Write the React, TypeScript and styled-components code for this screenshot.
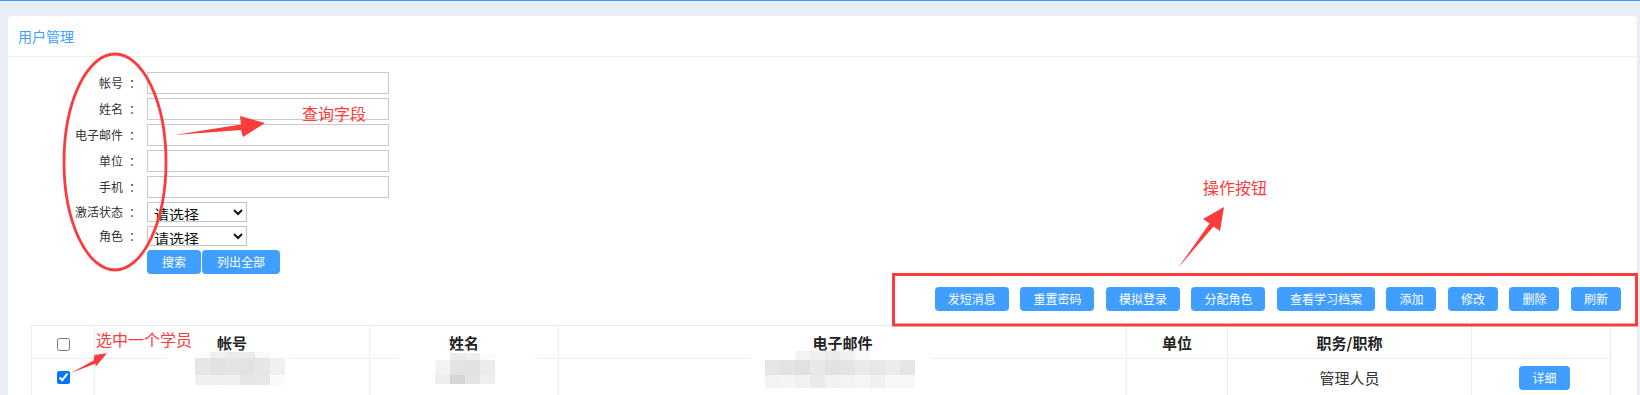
import React from 'react';
import styled, { createGlobalStyle } from 'styled-components';

const FONT = `"Noto Sans CJK SC", "Noto Sans", "Liberation Sans", sans-serif`;
const BLUE = '#409eff';
const RED = '#fb3c3c';

const GlobalStyle = createGlobalStyle`
  html, body {
    margin: 0;
    padding: 0;
    background: #eaedf4;
    font-family: ${FONT};
  }
  * { box-sizing: border-box; }
`;

const Page = styled.div`
  position: relative;
  width: 100%;
  height: 395px;
  overflow: hidden;
  background: #eaedf4;
`;

const TopLine = styled.div`
  height: 1px;
  background: #3e9cf7;
`;

const Card = styled.section`
  margin: 15px 3px 0 8px;
  height: 379px;
  background: #fff;
  border-radius: 4px 4px 0 0;
  overflow: hidden;
`;

const CardHeader = styled.header`
  height: 41px;
  line-height: 40px;
  padding-left: 10px;
  font-size: 14px;
  color: ${BLUE};
  border-bottom: 1px solid #eceef2;
`;

const SearchForm = styled.form`
  display: grid;
  grid-template-columns: 48px 12px auto;
  column-gap: 6px;
  row-gap: 4px;
  align-items: center;
  justify-content: start;
  padding: 15px 0 0 67px;
`;

const Label = styled.label`
  font-size: 12px;
  line-height: 1;
  color: #333;
  text-align: right;
  white-space: nowrap;
`;

const Colon = styled.span`
  font-size: 12px;
  line-height: 1;
  color: #333;
  text-align: center;
`;

const TextInput = styled.input`
  width: 242px;
  height: 22px;
  margin: 0;
  padding: 0 4px;
  border: 1px solid #c9c9c9;
  background: #fff;
  font-family: ${FONT};
  font-size: 12px;
`;

const Select = styled.select`
  width: 100px;
  height: 20px;
  margin: 0;
  padding: 0 0 0 2px;
  border: 1px solid #c4c4c4;
  border-radius: 0;
  background: #fff;
  color: #111;
  font-family: ${FONT};
  font-size: 15px;
  line-height: 18px;
`;

const ButtonGroup = styled.div`
  display: flex;
  gap: 1px;
`;

const Button = styled.button<{ $pad?: number }>`
  height: 24px;
  margin: 0;
  padding: 0 ${(p) => p.$pad ?? 13}px;
  border: none;
  border-radius: 4px;
  background: ${BLUE};
  color: #fff;
  font-family: ${FONT};
  font-size: 12px;
  line-height: 24px;
  white-space: nowrap;
  cursor: pointer;
`;

const Toolbar = styled.div`
  display: flex;
  justify-content: flex-end;
  gap: 11.5px;
  margin-top: 13px;
  padding-right: 16px;
`;

const TableWrap = styled.div`
  position: relative;
  margin: 14px 0 0 23px;
  width: 1579px;
`;

const Table = styled.table`
  width: 100%;
  border-collapse: collapse;
  table-layout: fixed;
`;

const HeadCell = styled.th`
  height: 33px;
  padding: 0;
  border: 1px solid #ebedf0;
  font-size: 15px;
  font-weight: bold;
  color: #222;
  text-align: center;
  vertical-align: middle;
`;

const Cell = styled.td<{ $top?: boolean; $shift?: number }>`
  height: 38px;
  padding: ${(p) => (p.$top ? '6px 0 0' : `0 0 0 ${p.$shift ?? 0}px`)};
  border: 1px solid #ebedf0;
  font-size: 15px;
  color: #333;
  text-align: center;
  vertical-align: ${(p) => (p.$top ? 'top' : 'middle')};
`;

const Check = styled.input`
  width: 13px;
  height: 13px;
  margin: 0;
  vertical-align: middle;
  accent-color: #0075ff;
`;

const Redaction = styled.div<{ $x: number; $y: number; $w: number; $h: number; $px: number; $py: number }>`
  position: absolute;
  left: ${(p) => p.$x}px;
  top: ${(p) => p.$y}px;
  width: ${(p) => p.$w}px;
  height: ${(p) => p.$h}px;
  padding: ${(p) => p.$py}px 0 0 ${(p) => p.$px}px;
  background: #fff;
  border-radius: 10px;
  box-shadow: 0 2px 4px 1px #fff;
`;

const Mosaic = styled.div<{ $cols: number; $rows: string }>`
  display: grid;
  grid-template-columns: repeat(${(p) => p.$cols}, 15px);
  grid-template-rows: ${(p) => p.$rows};
  filter: blur(0.4px);
`;

const Tile = styled.span<{ $c: string }>`
  display: block;
  background: ${(p) => p.$c};
`;

const Overlay = styled.svg`
  position: absolute;
  left: 0;
  top: 0;
  pointer-events: none;
`;

const Note = styled.span<{ $x: number; $y: number; $size: number }>`
  position: absolute;
  left: ${(p) => p.$x}px;
  top: ${(p) => p.$y}px;
  font-size: ${(p) => p.$size}px;
  line-height: 1;
  color: ${RED};
  white-space: nowrap;
  pointer-events: none;
`;

const fields = ['帐号', '姓名', '电子邮件', '单位', '手机'];
const selects = ['激活状态', '角色'];
const actions = ['发短消息', '重置密码', '模拟登录', '分配角色', '查看学习档案', '添加', '修改', '删除', '刷新'];
const columns: { w: number; label?: string }[] = [
  { w: 63 },
  { w: 275, label: '帐号' },
  { w: 189, label: '姓名' },
  { w: 568, label: '电子邮件' },
  { w: 101, label: '单位' },
  { w: 244, label: '职务/职称' },
  { w: 139 },
];

type Blob = { x: number; y: number; w: number; h: number; px: number; py: number; rows: string; colors: string[][] };

const blobs: Blob[] = [
  {
    x: 135, y: 26, w: 120, h: 35, px: 29, py: 1, rows: '6px 17px 10px',
    colors: [
      ['#fdfdfd', '#f0f0f0', '#ebebeb', '#ececec', '#f9f9f9', '#ffffff'],
      ['#e6e6e6', '#e2e2e2', '#e4e4e4', '#e3e3e3', '#e6e6e6', '#f0f0f0'],
      ['#efefef', '#f0f0f0', '#efefef', '#e6e6e6', '#e7e7e7', '#fafafa'],
    ],
  },
  {
    x: 369, y: 26, w: 134, h: 34, px: 35, py: 2, rows: '7px 15px 9px',
    colors: [
      ['#ffffff', '#ebebeb', '#efefef', '#fafafa'],
      ['#f3f3f3', '#e3e3e3', '#e2e2e2', '#ececec'],
      ['#ededed', '#d6d6d6', '#e4e4e4', '#efefef'],
    ],
  },
  {
    x: 721, y: 26, w: 179, h: 40, px: 13, py: 0, rows: '9px 15px 13px',
    colors: [
      ['#ffffff', '#ffffff', '#f2f3f5', '#eef0f2', '#e8eaec', '#eef0f2', '#f8f9fa', '#ffffff', '#ffffff', '#ffffff'],
      ['#e5e5e5', '#e3e3e3', '#e1e1e1', '#e6e8ea', '#e0e2e4', '#e4e4e4', '#e9e9e9', '#e7e7e7', '#ebebeb', '#e6e6e6'],
      ['#f3f3f3', '#f4f4f4', '#f2f2f2', '#eaeaea', '#f2f2f2', '#f3f3f3', '#f5f5f5', '#f0f0f0', '#f7f7f7', '#f7f7f7'],
    ],
  },
];

export default function App() {
  return (
    <>
      <GlobalStyle />
      <Page>
        <TopLine />
        <Card>
          <CardHeader>用户管理</CardHeader>
          <SearchForm onSubmit={(e) => e.preventDefault()}>
            {fields.map((f) => (
              <React.Fragment key={f}>
                <Label>{f}</Label>
                <Colon>：</Colon>
                <TextInput type="text" />
              </React.Fragment>
            ))}
            {selects.map((f) => (
              <React.Fragment key={f}>
                <Label>{f}</Label>
                <Colon>：</Colon>
                <Select defaultValue="">
                  <option value="">请选择</option>
                </Select>
              </React.Fragment>
            ))}
            <span />
            <span />
            <ButtonGroup>
              <Button type="button" $pad={15}>搜索</Button>
              <Button type="button" $pad={15}>列出全部</Button>
            </ButtonGroup>
          </SearchForm>
          <Toolbar>
            {actions.map((a) => (
              <Button key={a} type="button">{a}</Button>
            ))}
          </Toolbar>
          <TableWrap>
            <Table>
              <colgroup>
                {columns.map((c, i) => (
                  <col key={i} style={{ width: c.w }} />
                ))}
              </colgroup>
              <thead>
                <tr>
                  <HeadCell><Check type="checkbox" /></HeadCell>
                  {columns.slice(1).map((c, i) => (
                    <HeadCell key={i}>{c.label ?? ''}</HeadCell>
                  ))}
                </tr>
              </thead>
              <tbody>
                <tr>
                  <Cell $top><Check type="checkbox" defaultChecked /></Cell>
                  <Cell />
                  <Cell />
                  <Cell />
                  <Cell />
                  <Cell>管理人员</Cell>
                  <Cell $shift={7}><Button type="button">详细</Button></Cell>
                </tr>
              </tbody>
            </Table>
            {blobs.map((b, i) => (
              <Redaction key={i} $x={b.x} $y={b.y} $w={b.w} $h={b.h} $px={b.px} $py={b.py}>
                <Mosaic $cols={b.colors[0].length} $rows={b.rows}>
                  {b.colors.flat().map((c, j) => (
                    <Tile key={j} $c={c} />
                  ))}
                </Mosaic>
              </Redaction>
            ))}
          </TableWrap>
        </Card>

        <Overlay width="1640" height="395" viewBox="0 0 1640 395">
          <ellipse cx="115" cy="162" rx="51" ry="108" fill="none" stroke={RED} strokeWidth="2.8" />
          <polygon points="174,135 241,124.5 240,116 265,123 243,137 241,130" fill={RED} />
          <polygon points="1178,268 1209.5,223.5 1203,219 1224,207 1220,231 1213.5,226.5" fill={RED} />
          <polygon points="71,373 93.5,360.5 94.6,355 107,353.3 95.7,366.7 95.5,363.5" fill={RED} />
          <rect x="893.5" y="274.5" width="743" height="50.5" fill="none" stroke={RED} strokeWidth="3" />
        </Overlay>
        <Note $x={302} $y={105} $size={16}>查询字段</Note>
        <Note $x={1203} $y={179} $size={16}>操作按钮</Note>
        <Note $x={96} $y={331} $size={16}>选中一个学员</Note>
      </Page>
    </>
  );
}
